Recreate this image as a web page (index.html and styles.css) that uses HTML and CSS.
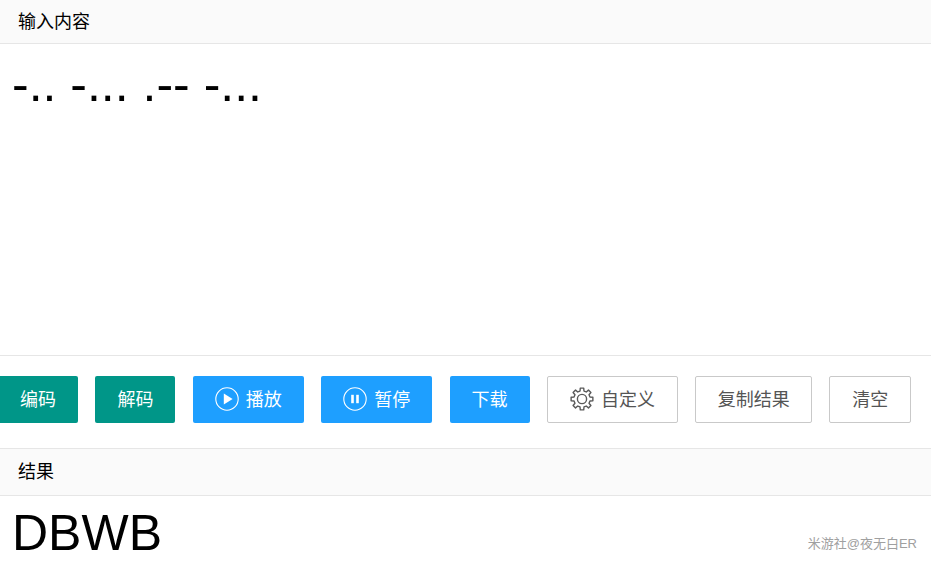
FILE: index.html
```html
<!DOCTYPE html>
<html lang="zh-CN">

<head>
    <meta charset="UTF-8">
    <meta name="viewport" content="width=device-width, initial-scale=1.0">
    <title>摩斯密码</title>
    <link rel="stylesheet" href="styles.css">
</head>

<body>

    <div class="panel-title panel-title-input">输入内容</div>
    <div class="input-box">-.. -... .-- -...</div>

    <div class="toolbar">
        <button class="btn btn-green btn-first">编码</button>
        <button class="btn btn-green">解码</button>
        <button class="btn btn-blue btn-icon">
            <svg class="icon" viewBox="0 0 24 24" width="24" height="24">
                <circle cx="12" cy="12" r="11.2" fill="none" stroke="#fff" stroke-width="1.1"/>
                <path d="M8.8 6.6 L17.6 12 L8.8 17.4 Z" fill="#fff"/>
            </svg>
            播放
        </button>
        <button class="btn btn-blue btn-icon">
            <svg class="icon" viewBox="0 0 24 24" width="24" height="24">
                <circle cx="12" cy="12" r="11.2" fill="none" stroke="#fff" stroke-width="1.1"/>
                <rect x="8.2" y="7.8" width="2.6" height="8.4" fill="#fff"/>
                <rect x="13.2" y="7.8" width="2.6" height="8.4" fill="#fff"/>
            </svg>
            暂停
        </button>
        <button class="btn btn-blue">下载</button>
        <button class="btn btn-plain btn-icon">
            <svg class="icon" viewBox="0 0 24 24" width="24" height="24">
                <polygon points="10.02,4.04 10.28,1.13 13.72,1.13 13.98,4.04 16.23,4.97 18.47,3.1 20.9,5.53 19.03,7.77 19.96,10.02 22.87,10.28 22.87,13.72 19.96,13.98 19.03,16.23 20.9,18.47 18.47,20.9 16.23,19.03 13.98,19.96 13.72,22.87 10.28,22.87 10.02,19.96 7.77,19.03 5.53,20.9 3.1,18.47 4.97,16.23 4.04,13.98 1.13,13.72 1.13,10.28 4.04,10.02 4.97,7.77 3.1,5.53 5.53,3.1 7.77,4.97" fill="none" stroke="#5a5a5a" stroke-width="1.4" stroke-linejoin="round"/>
                <circle cx="12" cy="12" r="4.6" fill="none" stroke="#5a5a5a" stroke-width="1.4"/>
            </svg>
            自定义
        </button>
        <button class="btn btn-plain">复制结果</button>
        <button class="btn btn-plain">清空</button>
    </div>

    <div class="panel-title panel-title-result">结果</div>
    <div class="result-box">
        DBWB
        <span class="watermark">米游社@夜无白ER</span>
    </div>

</body>

</html>
```

FILE: styles.css
```css
/* Morse code page */
html,
body {
    height: 100%;
}

body {
    margin: 0;
    overflow: hidden;
    background-color: #fff;
    color: #000;
    font-family: "Liberation Sans", "Noto Sans CJK SC", sans-serif;
}

.panel-title {
    height: 43px;
    padding-left: 18px;
    line-height: 43px;
    font-size: 18px;
    background-color: #fafafa;
    border-bottom: 1px solid #e6e6e6;
}

.panel-title-input {
    line-height: 45px;
}

.panel-title-result {
    height: 46px;
    line-height: 46px;
    border-top: 1px solid #e6e6e6;
}

.input-box {
    height: 311px;
    padding: 10px 12px 0;
    box-sizing: border-box;
    font-size: 50px;
    line-height: 60px;
}

.toolbar {
    display: flex;
    gap: 17.4px;
    height: 93px;
    box-sizing: border-box;
    padding: 20px 0 0;
    margin-left: -2px;
    border-top: 1px solid #e6e6e6;
}

.btn {
    display: flex;
    align-items: center;
    justify-content: center;
    width: 80px;
    height: 47px;
    padding: 0 0 3px;
    border: 1px solid transparent;
    border-radius: 2px;
    font-family: inherit;
    font-size: 18px;
    cursor: pointer;
}

.btn-icon {
    width: 111px;
    gap: 7px;
}

.btn-icon .icon {
    margin-top: 1px;
}

.btn-green {
    background-color: #009688;
    color: #fff;
}

.btn-blue {
    background-color: #1e9fff;
    color: #fff;
}

.btn-plain {
    background-color: #fff;
    border-color: #c9c9c9;
    color: #555;
}

.btn-plain.btn-icon {
    width: 131px;
}

.btn-plain:nth-last-child(2) {
    width: 117px;
}

.btn-plain:last-child {
    width: 82px;
    margin-left: -0.5px;
}

.result-box {
    position: relative;
    height: 68px;
    padding-left: 12px;
    font-size: 50px;
    line-height: 74px;
}

.watermark {
    position: absolute;
    right: 14px;
    bottom: 11px;
    font-size: 13px;
    line-height: 18px;
    color: #a0a0a0;
}
```
